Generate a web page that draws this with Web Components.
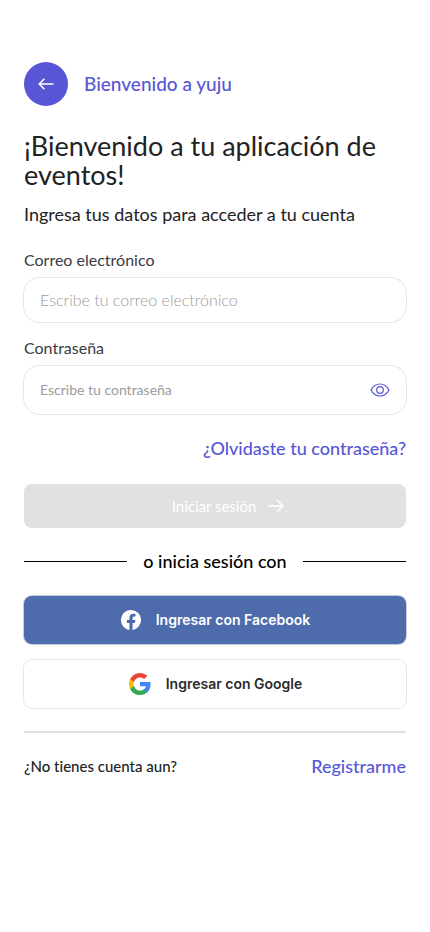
<!DOCTYPE html>
<html lang="es">
<head>
<meta charset="utf-8">
<meta name="viewport" content="width=device-width, initial-scale=1">
<title>Bienvenido a yuju</title>
<style>
  :root {
    --brand: #5856d6;
    --ink: #222222;
    --label: #3a3a44;
    --hint: #9b9b9b;
    --line: #e8e8e8;
    --muted: #e0e1e3;
  }
  body {
    margin: 0;
    background: #fff;
    color: var(--ink);
    font-family: Lato, "Liberation Sans", sans-serif;
    font-variant-ligatures: none;
  }
</style>
</head>
<body>
<login-page></login-page>

<template id="page-header-tpl">
  <style>
    :host { display: flex; align-items: center; gap: 16px; color: var(--brand); }
    button {
      width: 44px; height: 44px; padding: 0; border: 0; border-radius: 50%;
      background: var(--brand); color: #fff; display: grid; place-items: center; cursor: pointer;
    }
    span { font-size: 19px; line-height: 24px; font-weight: 500; }
  </style>
  <button type="button" aria-label="Volver">
    <svg width="16" height="12" viewBox="0 0 16 12" fill="none" stroke="currentColor" stroke-width="1.6" stroke-linecap="round" stroke-linejoin="round" aria-hidden="true"><path d="M15 6H1.2M6 1.2 1.2 6 6 10.8"/></svg>
  </button>
  <span><slot></slot></span>
</template>

<template id="text-field-tpl">
  <style>
    :host { display: block; }
    label { display: block; font-size: 16px; line-height: 20px; color: var(--label); margin-bottom: 8px; }
    .box {
      display: flex; align-items: center; height: var(--field-height, 44px); padding: 0 16px;
      border-radius: 16px; box-shadow: 0 0 0 1px var(--line);
    }
    input {
      flex: 1; min-width: 0; border: 0; padding: 0; outline: 0; background: none;
      font-family: inherit; font-size: var(--field-size, 16px); line-height: 20px;
      font-weight: var(--field-weight, 400); color: var(--ink);
    }
    input::placeholder { color: var(--hint); opacity: 1; }
  </style>
  <label for="control"></label>
  <div class="box"><input id="control"><slot name="action"></slot></div>
</template>

<template id="eye-button-tpl">
  <style>
    :host { display: block; }
    button { display: block; padding: 0; border: 0; background: none; color: var(--brand); cursor: pointer; }
    svg { display: block; }
  </style>
  <button type="button" aria-label="Mostrar contraseña">
    <svg width="20" height="20" viewBox="0 0 20 20" fill="none" stroke="currentColor" stroke-width="1.2" aria-hidden="true"><path d="M1 10C3 6.200 6.300 4 10 4s7 2.200 9 6c-2 3.800-5.300 6-9 6s-7-2.200-9-6Z"/><circle cx="10" cy="10" r="3.300"/></svg>
  </button>
</template>

<template id="text-link-tpl">
  <style>
    :host { display: block; }
    a { color: var(--brand); font-size: 18px; line-height: 24px; font-weight: 500; text-decoration: none; }
  </style>
  <a href="#"><slot></slot></a>
</template>

<template id="submit-button-tpl">
  <style>
    :host { display: block; }
    button {
      display: flex; align-items: center; justify-content: center; gap: 12px; width: 100%; height: 44px;
      padding: 0 0 0 26px; border: 0; border-radius: 8px; background: var(--muted); color: #fff;
      font-family: inherit; font-size: 15px; line-height: 20px; font-weight: 400;
    }
  </style>
  <button type="submit" disabled>
    <slot></slot>
    <svg width="16" height="14" viewBox="0 0 16 14" fill="none" stroke="currentColor" stroke-width="1.300" stroke-linecap="round" stroke-linejoin="round" aria-hidden="true"><path d="M.8 7h14.200M9.200 1.200 15 7l-5.800 5.800"/></svg>
  </button>
</template>

<template id="or-divider-tpl">
  <style>
    :host {
      display: flex; align-items: center; gap: 16px; color: #000;
      font-size: 18px; line-height: 24px; font-weight: 500;
    }
    :host::before, :host::after { content: ""; flex: 1; height: 1px; background: #000; }
  </style>
  <slot></slot>
</template>

<template id="social-button-tpl">
  <style>
    :host { display: block; }
    button {
      display: flex; align-items: center; justify-content: center; gap: 14px; width: 100%; height: 48px;
      padding: 0; border: 0; border-radius: 8px; background: #fff; color: #2b2b2b;
      box-shadow: 0 0 0 1px var(--line);
      font-family: Inter, "Liberation Sans", sans-serif; font-size: 14px; line-height: 20px; font-weight: 600; cursor: pointer;
    }
    :host([brand="facebook"]) button { background: #4e6cab; color: #fff; box-shadow: 0 0 0 1px #c4cde2; }
    ::slotted(svg) { display: block; }
  </style>
  <button type="button"><slot name="icon"></slot><slot></slot></button>
</template>

<template id="login-page-tpl">
  <style>
    :host { display: block; padding: 62px 24px 24px; }
    h1 { margin: 25px 0 0; font-size: 27px; line-height: 29px; font-weight: 400; }
    .lead { margin: 13px 0 0; font-size: 18px; line-height: 24px; }
    form { display: flex; flex-direction: column; margin: 24px 0 0; }
    .email { --field-weight: 300; }
    .password { --field-height: 48px; --field-size: 14px; margin-top: 16px; }
    .forgot { margin-top: 22px; text-align: right; }
    submit-button { margin-top: 24px; }
    or-divider { margin-top: 21px; }
    .social { display: grid; gap: 16px; margin-top: 23px; }
    hr { margin: 23px 0 0; border: 0; height: 2px; background: var(--muted); }
    footer { display: flex; align-items: center; justify-content: space-between; margin-top: 21px; }
    footer p { margin: 0; font-size: 15px; line-height: 24px; font-weight: 500; }
  </style>
  <page-header>Bienvenido a yuju</page-header>
  <main>
    <h1>¡Bienvenido a tu aplicación de eventos!</h1>
    <p class="lead">Ingresa tus datos para acceder a tu cuenta</p>
    <form>
      <text-field class="email" type="email" label="Correo electrónico" placeholder="Escribe tu correo electrónico"></text-field>
      <text-field class="password" type="password" label="Contraseña" placeholder="Escribe tu contraseña"><eye-button slot="action"></eye-button></text-field>
      <text-link class="forgot">¿Olvidaste tu contraseña?</text-link>
      <submit-button>Iniciar sesión</submit-button>
    </form>
    <or-divider>o inicia sesión con</or-divider>
    <div class="social">
      <social-button brand="facebook">
        <svg slot="icon" width="22" height="22" viewBox="0 0 24 24" aria-hidden="true"><path fill="#fff" d="M23 12a11 11 0 1 0-12.700 10.870v-7.690H7.500V12h2.800V9.570c0-2.760 1.640-4.280 4.150-4.280 1.200 0 2.460.21 2.460.21v2.710h-1.390c-1.360 0-1.790.85-1.790 1.720V12h3.050l-.49 3.180h-2.560v7.690A11 11 0 0 0 23 12Z"/></svg>Ingresar con Facebook</social-button>
      <social-button brand="google">
        <svg slot="icon" width="24" height="24" viewBox="0 0 24 24" aria-hidden="true"><path fill="#4285f4" d="M22.560 12.250c0-.78-.07-1.530-.2-2.250H12v4.260h5.920a5.060 5.060 0 0 1-2.200 3.320v2.770h3.570c2.080-1.920 3.270-4.740 3.270-8.100Z"/><path fill="#34a853" d="M12 23c2.970 0 5.460-.98 7.280-2.660l-3.570-2.770c-.98.66-2.230 1.060-3.710 1.060-2.860 0-5.290-1.930-6.160-4.530H2.180v2.840A11 11 0 0 0 12 23Z"/><path fill="#fbbc05" d="M5.840 14.090a6.600 6.600 0 0 1 0-4.180V7.070H2.180a11 11 0 0 0 0 9.860l3.660-2.840Z"/><path fill="#ea4335" d="M12 5.380c1.620 0 3.060.56 4.210 1.640l3.150-3.150A11 11 0 0 0 2.180 7.070l3.660 2.840C6.710 7.310 9.140 5.380 12 5.380Z"/></svg>Ingresar con Google</social-button>
    </div>
    <hr>
    <footer>
      <p>¿No tienes cuenta aun?</p>
      <text-link>Registrarme</text-link>
    </footer>
  </main>
</template>

<script>
  class TemplateElement extends HTMLElement {
    constructor() {
      super();
      const tpl = document.getElementById(this.localName + "-tpl");
      this.attachShadow({ mode: "open" }).append(document.importNode(tpl.content, true));
    }
  }

  class TextField extends TemplateElement {
    connectedCallback() {
      const input = this.shadowRoot.querySelector("input");
      input.type = this.getAttribute("type") || "text";
      input.placeholder = this.getAttribute("placeholder") || "";
      this.shadowRoot.querySelector("label").textContent = this.getAttribute("label");
    }
  }

  class EyeButton extends TemplateElement {
    connectedCallback() {
      this.shadowRoot.querySelector("button").addEventListener("click", () => {
        const input = this.closest("text-field").shadowRoot.querySelector("input");
        input.type = input.type === "password" ? "text" : "password";
      });
    }
  }

  customElements.define("page-header", class extends TemplateElement {});
  customElements.define("text-field", TextField);
  customElements.define("eye-button", EyeButton);
  customElements.define("text-link", class extends TemplateElement {});
  customElements.define("submit-button", class extends TemplateElement {});
  customElements.define("or-divider", class extends TemplateElement {});
  customElements.define("social-button", class extends TemplateElement {});
  customElements.define("login-page", class extends TemplateElement {});
</script>
</body>
</html>
